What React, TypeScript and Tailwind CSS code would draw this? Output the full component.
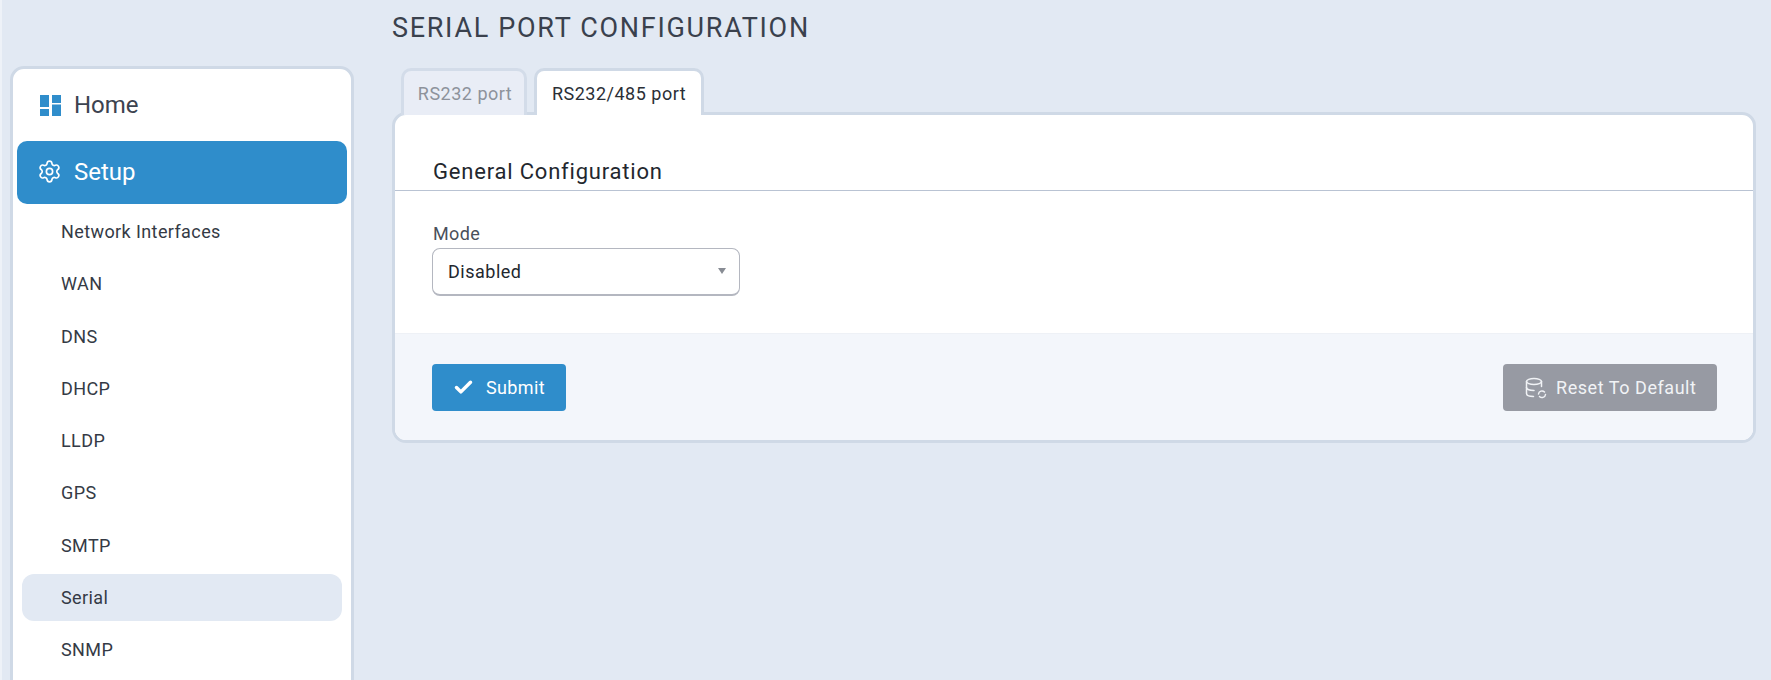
import { Settings, Check } from "lucide-react";

const items = ["Network Interfaces", "WAN", "DNS", "DHCP", "LLDP", "GPS", "SMTP", "Serial", "SNMP"];

export default function App() {
  return (
    <div className="h-[680px] w-[1771px] overflow-hidden bg-[#e2e9f3] flex items-start border-l-2 border-[#eef2f8] font-['Roboto',sans-serif] text-[#343a45]">
      <aside className="ml-[8px] mt-[66px] h-[640px] w-[344px] shrink-0 rounded-[14px] border-[3px] border-[#cfd9e6] bg-white px-[4px] pt-[3px]">
        <div className="flex h-[66px] items-center px-[23px] text-[24px] text-[#3c4350]">
          <svg width="21" height="21" viewBox="0 0 21 21" className="mr-[13px] shrink-0" fill="#2f8dcb">
            <rect x="0" y="0" width="9" height="12" />
            <rect x="12" y="0" width="9" height="8" />
            <rect x="12" y="9.5" width="9" height="11.5" />
            <rect x="0" y="14" width="9" height="7" />
          </svg>
          <span>Home</span>
        </div>
        <div className="mt-[3px] flex h-[63px] items-center gap-[12px] rounded-[10px] bg-[#2f8dcb] pb-[2px] pl-[20px] text-[24px] text-white">
          <Settings size={25} strokeWidth={1.6} />
          <span>Setup</span>
        </div>
        <ul className="mt-[4.5px] flex flex-col gap-[6px] px-[5px] text-[18px] tracking-[0.4px]">
          {items.map((item) => (
            <li
              key={item}
              className={
                "flex h-[46.25px] items-center rounded-[12px] pl-[39px] " + (item === "Serial" ? "bg-[#e2e9f3]" : "")
              }
            >
              {item}
            </li>
          ))}
        </ul>
      </aside>
      <main className="ml-[38px] w-[1364px] shrink-0">
        <h1 className="h-[68px] pt-[11px] text-[27px] leading-[34px] tracking-[1.7px] text-[#3a414d]">
          SERIAL PORT CONFIGURATION
        </h1>
        <div className="relative z-10 -mb-[3px] flex h-[47px] items-stretch gap-[7px] pl-[9px]">
          <div className="flex w-[126px] items-center justify-center rounded-t-[10px] border-[3px] border-b-0 border-[#d3dce9] bg-[#e9edf6] pl-[2px] text-[18px] tracking-[0.5px] text-[#8d929b]">
            RS232 port
          </div>
          <div className="flex w-[170px] items-center justify-center rounded-t-[10px] border-[3px] border-b-0 border-[#cfd9e6] bg-white text-[18px] tracking-[0.5px] text-[#2b2f36]">
            RS232/485 port
          </div>
        </div>
        <section className="h-[331px] overflow-hidden rounded-[14px] border-[3px] border-[#cfd9e6] bg-white">
          <div className="flex h-[76px] items-end border-b border-[#b9c3d3] pb-[3px] pl-[38px] text-[22px] leading-[30px] tracking-[0.8px] text-[#23272e]">
            General Configuration
          </div>
          <div className="h-[143px] border-b border-[#eef1f6] pl-[37px] pt-[31px]">
            <div className="h-[26px] pl-px text-[18px] leading-[24px] tracking-[0.4px] text-[#4a505b]">Mode</div>
            <div className="relative flex h-[48px] w-[308px] items-center rounded-[8px] border border-b-2 border-[#b4b7c0] pl-[15px] text-[18px] tracking-[0.5px] text-[#23272e]">
              Disabled
              <span className="absolute right-[13px] top-[19px] h-0 w-0 border-x-[4px] border-t-[6px] border-x-transparent border-t-[#888c94]" />
            </div>
          </div>
          <div className="flex h-[106px] items-start justify-between bg-[#f3f6fb] pl-[37px] pr-[36px] pt-[30px]">
            <div className="flex h-[47px] w-[134px] items-center gap-[12px] rounded-[4px] bg-[#2f8dcb] pl-[21px] text-[18px] tracking-[0.35px] text-white">
              <Check size={21} strokeWidth={4} />
              <span>Submit</span>
            </div>
            <div className="flex h-[47px] w-[214px] items-center gap-[9px] rounded-[4px] bg-[#979aa3] pl-[22px] text-[18px] tracking-[0.55px] text-[#f1f3f6]">
              <svg width="22" height="22" viewBox="0 0 22 22" fill="none" stroke="currentColor" strokeWidth="1.5" strokeLinecap="round">
                <ellipse cx="9" cy="4.5" rx="7.5" ry="3" />
                <path d="M1.5 4.5v12c0 1.7 3 3 7 3" />
                <path d="M16.5 4.5v5" />
                <path d="M1.5 10.5c0 1.7 3.4 3 7.5 3" />
                <path d="M13.5 17a3.5 3.5 0 0 1 6-2" />
                <path d="M20.5 17.5a3.5 3.5 0 0 1-6 2" />
              </svg>
              <span>Reset To Default</span>
            </div>
          </div>
        </section>
      </main>
    </div>
  );
}
